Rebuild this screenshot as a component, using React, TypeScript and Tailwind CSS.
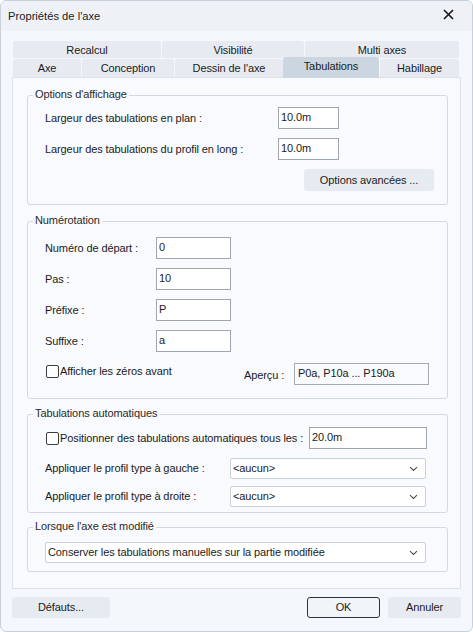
import React from "react";

function Chevron() {
  return (
    <svg width="9" height="6" viewBox="0 0 9 6" className="shrink-0">
      <path d="M1 1.2 L4.5 4.5 L8 1.2" fill="none" stroke="#4a4f57" strokeWidth="1.1" />
    </svg>
  );
}

function Select({ value, w }: { value: string; w: string }) {
  return (
    <div className={`${w} h-[21px] bg-white border border-[#c9d0d9] rounded-[2px] flex items-center justify-between pl-[2px] pr-[7px]`}>
      <span>{value}</span>
      <Chevron />
    </div>
  );
}

function Input({ value, w }: { value: string; w: string }) {
  return (
    <div className={`${w} h-[22px] bg-white border border-[#9ea6b0] flex items-center pl-[2px] pb-[2px]`}>
      <span>{value}</span>
    </div>
  );
}

function Checkbox() {
  return <div className="w-[13px] h-[13px] border border-[#3a3d42] rounded-[2px] bg-white shrink-0" />;
}

function Group({ title, className, children }: { title: string; className: string; children: React.ReactNode }) {
  return (
    <div className={`relative border border-[#d2d9e2] rounded-[3px] ${className}`}>
      <span className="absolute -top-[7px] left-[5px] px-[2px] bg-[#f8fafd] text-[#2a2a2a]">{title}</span>
      {children}
    </div>
  );
}

export default function App() {
  return (
    <div className="w-[473px] h-[632px] border border-[#c9d0da] rounded-[6px] bg-[#f4f7fb] overflow-hidden font-['Liberation_Sans',Arial,sans-serif] text-[11px] tracking-[-0.1px] text-[#1b1b1b] leading-none">
      <div className="h-[30px] bg-[#eef2f7] flex items-center justify-between pl-[7px] pr-[18px] pt-[2px]">
        <span className="text-[11.2px] tracking-[0px]">Propriétés de l'axe</span>
        <svg width="11" height="11" viewBox="0 0 11 11" className="-mt-[5px]">
          <path d="M1 1 L10 10 M10 1 L1 10" stroke="#1a1a1a" strokeWidth="1.7" />
        </svg>
      </div>
      <div className="px-[11px] pt-[10px]">
        <div className="flex gap-[1px] ml-[1px] h-[17px] mb-[1px]">
          <div className="w-[148px] bg-[#e7ebf1] rounded-t-[3px] flex items-center justify-center pt-[1px]">Recalcul</div>
          <div className="w-[142px] bg-[#e7ebf1] rounded-t-[3px] flex items-center justify-center pt-[1px]">Visibilité</div>
          <div className="w-[154px] bg-[#e7ebf1] rounded-t-[3px] flex items-center justify-center pt-[1px]">Multi axes</div>
        </div>
        <div className="flex items-start ml-[1px] h-[18px]">
          <div className="w-[68px] h-[18px] bg-[#e7ebf1] rounded-t-[3px] flex items-center justify-center">Axe</div>
          <div className="w-[92px] ml-[1px] h-[18px] bg-[#e7ebf1] rounded-t-[3px] flex items-center justify-center">Conception</div>
          <div className="w-[108px] ml-[1px] h-[18px] bg-[#e7ebf1] rounded-t-[3px] flex items-center justify-center">Dessin de l'axe</div>
          <div className="relative z-10 w-[96px] -mt-[2px] h-[21px] bg-[#ccd6e0] rounded-t-[3px] flex items-start justify-center pt-[4px]">Tabulations</div>
          <div className="w-[79px] ml-[1px] h-[18px] bg-[#e7ebf1] rounded-t-[3px] flex items-center justify-center">Habillage</div>
        </div>
        <div className="h-[512px] border border-[#dce2ea] bg-[#f8fafd] pl-[14px] pr-[12px] pt-[17px]">
          <Group title="Options d'affichage" className="pl-[17px] pr-[13px] pt-[11px] pb-[13px]">
            <div className="flex items-center">
              <span className="w-[233px]">Largeur des tabulations en plan :</span>
              <Input value="10.0m" w="w-[61px]" />
            </div>
            <div className="flex items-center mt-[9px]">
              <span className="w-[233px]">Largeur des tabulations du profil en long :</span>
              <Input value="10.0m" w="w-[61px]" />
            </div>
            <div className="flex justify-end mt-[9px]">
              <div className="w-[130px] h-[22px] bg-[#e6ebf2] rounded-[3px] flex items-center justify-center">Options avancées ...</div>
            </div>
          </Group>

          <Group title="Numérotation" className="mt-[16px] pl-[17px] pt-[15px] pb-[13px]">
            {[
              ["Numéro de départ :", "0"],
              ["Pas :", "10"],
              ["Préfixe :", "P"],
              ["Suffixe :", "a"],
            ].map(([l, v], i) => (
              <div key={l} className={`flex items-center ${i > 0 ? "mt-[9px]" : ""}`}>
                <span className="w-[111px]">{l}</span>
                <Input value={v} w="w-[75px]" />
              </div>
            ))}
            <div className="flex items-start mt-[11px]">
              <div className="w-[198px] flex items-center gap-[1px] mt-[2px] ml-[1px]">
                <Checkbox />
                <span className="-mt-[1px]">Afficher les zéros avant</span>
              </div>
              <span className="w-[50px] mt-[7px]">Aperçu :</span>
              <div className="w-[135px] h-[22px] border border-[#a2aab3] pl-[3px] pt-[4px]">P0a, P10a ... P190a</div>
            </div>
          </Group>

          <Group title="Tabulations automatiques" className="mt-[15px] pl-[17px] pt-[12px] pb-[5px]">
            <div className="flex items-center">
              <div className="w-[263px] flex items-center gap-[1px] ml-[1px]">
                <Checkbox />
                <span>Positionner des tabulations automatiques tous les :</span>
              </div>
              <Input value="20.0m" w="w-[118px]" />
            </div>
            <div className="flex items-center mt-[9px]">
              <span className="w-[185px]">Appliquer le profil type à gauche :</span>
              <Select value="<aucun>" w="w-[196px]" />
            </div>
            <div className="flex items-center mt-[7px]">
              <span className="w-[185px]">Appliquer le profil type à droite :</span>
              <Select value="<aucun>" w="w-[196px]" />
            </div>
          </Group>

          <Group title="Lorsque l'axe est modifié" className="mt-[14px] pl-[17px] pt-[14px] pb-[8px]">
            <Select value="Conserver les tabulations manuelles sur la partie modifiée" w="w-[381px]" />
          </Group>
        </div>
        <div className="flex items-center mt-[8px]">
          <div className="w-[98px] h-[21px] bg-[#e6ebf2] rounded-[3px] flex items-center justify-center">Défauts...</div>
          <div className="ml-auto w-[73px] h-[21px] border border-[#2f343a] bg-[#f1f4f8] rounded-[3px] flex items-center justify-center">OK</div>
          <div className="ml-[8px] w-[73px] h-[21px] bg-[#e6ebf2] rounded-[3px] flex items-center justify-center">Annuler</div>
        </div>
      </div>
    </div>
  );
}
